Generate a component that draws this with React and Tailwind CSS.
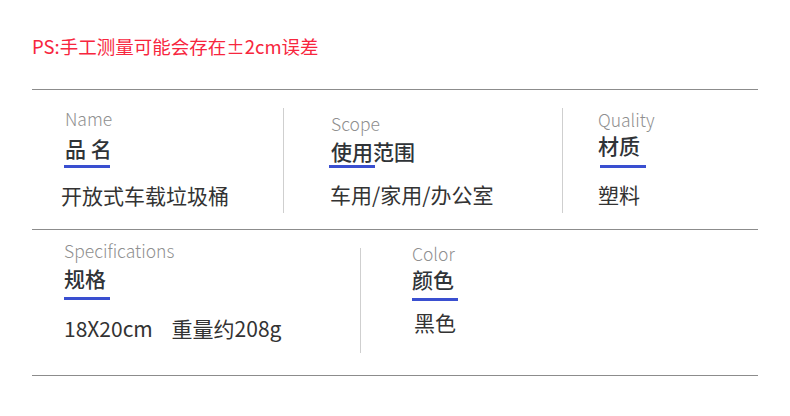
import React from 'react';

const FONT = { fontFamily: '"Noto Sans CJK SC", "Noto Sans", sans-serif' };

function Cell({ en, zh, value, enTop, zhGap, lineGap, valGap, lineLeft = 0, valLeft = 0 }) {
  return (
    <div className="flex flex-col">
      <div className="text-[17.5px] leading-none font-light text-[#8f8f8f]" style={{ marginTop: enTop }}>{en}</div>
      <div className="text-[21px] leading-none font-medium text-[#2f3337] whitespace-pre" style={{ marginTop: zhGap }}>{zh}</div>
      <div className="h-[3px] w-[46px] bg-[#3a4fd0]" style={{ marginTop: lineGap, marginLeft: lineLeft }} />
      <div className="text-[21px] leading-none text-[#333] whitespace-pre" style={{ marginTop: valGap, marginLeft: valLeft }}>{value}</div>
    </div>
  );
}

export default function App() {
  return (
    <div className="w-[790px] h-[416px] bg-white" style={FONT}>
      <div className="pt-[37px] pl-[32px] text-[18.5px] leading-none text-[#f7263e]">PS:手工测量可能会存在±2cm误差</div>

      <div className="ml-[32px] w-[726px] mt-[33px]">
        {/* row 1 */}
        <div className="flex h-[140px] border-t border-[#8c8c8c]">
          <div className="w-[251px] pl-[33px]">
            <Cell en="Name" zh="品 名" value="开放式车载垃圾桶" enTop={20} zhGap={11} lineGap={6} valGap={17} lineLeft={-1} valLeft={-4} />
          </div>
          <div className="w-[279px] flex">
            <div className="w-px bg-[#cfcfcf] mt-[18px] h-[105px]" />
            <div className="pl-[47px]">
              <Cell en="Scope" zh="使用范围" value="车用/家用/办公室" enTop={25} zhGap={9} lineGap={3} valGap={16} lineLeft={-2} valLeft={-1} />
            </div>
          </div>
          <div className="flex-1 flex">
            <div className="w-px bg-[#cfcfcf] mt-[18px] h-[105px]" />
            <div className="pl-[35px]">
              <Cell en="Quality" zh="材质" value="塑料" enTop={21} zhGap={7} lineGap={9} valGap={16} lineLeft={2} />
            </div>
          </div>
        </div>

        {/* row 2 */}
        <div className="flex h-[146px] border-t border-[#8c8c8c]">
          <div className="w-[328px] pl-[32px]">
            <Cell
              en="Specifications"
              zh="规格"
              value={'18X20cm    重量约208g'}
              enTop={12}
              zhGap={9}
              lineGap={8}
              valGap={18}
            />
          </div>
          <div className="flex-1 flex">
            <div className="w-px bg-[#cfcfcf] mt-[18px] h-[105px]" />
            <div className="pl-[51px]">
              <Cell en="Color" zh="颜色" value="黑色" enTop={15} zhGap={7} lineGap={8} valGap={11} valLeft={2} />
            </div>
          </div>
        </div>
        <div className="border-t border-[#8c8c8c]" />
      </div>
    </div>
  );
}
